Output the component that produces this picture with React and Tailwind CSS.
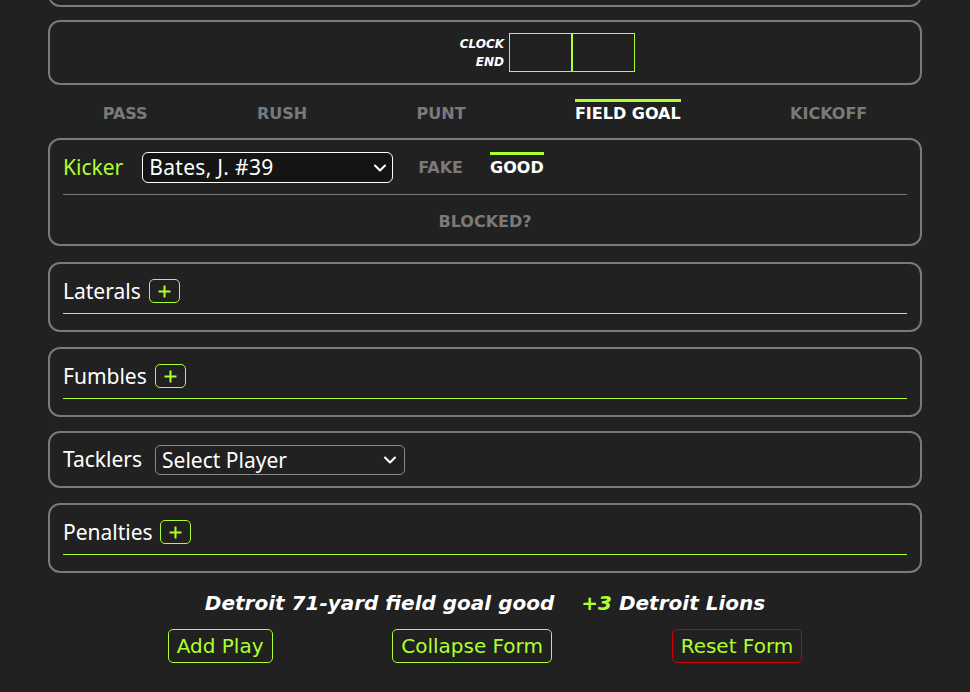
import React from 'react';
import { ChevronDown } from 'lucide-react';

const card = 'border-2 border-[#7a7a7a] rounded-[12px]';

function PlusBtn() {
  return (
    <div className="w-[31px] h-[24px] border border-[#adff2f] rounded-[5px] flex items-center justify-center">
      <svg width="13" height="13" viewBox="0 0 13 13">
        <path d="M6.5 0.5V12.5M0.5 6.5H12.5" stroke="#adff2f" strokeWidth="2" fill="none" />
      </svg>
    </div>
  );
}

function Section({ title, gap = 'gap-[8px]' }) {
  return (
    <div className={`${card} px-[13px] pt-[13px] pb-[16px]`}>
      <div className={`flex items-center h-[28px] ${gap}`}>
        <span className="text-white text-[21px] leading-[28px] font-['Noto_Sans',sans-serif]">{title}</span>
        <PlusBtn />
      </div>
      <div className="mt-[8px] h-px bg-[#adff2f]" />
    </div>
  );
}

function Tab({ label, active }) {
  return (
    <div
      className={`border-t-[3px] pt-[2px] leading-[20px] text-[16px] font-bold ${
        active ? 'border-[#adff2f] text-white' : 'border-transparent text-[#7a7a7a]'
      }`}
    >
      {label}
    </div>
  );
}

function Btn({ label, red }) {
  return (
    <div
      className={`h-[34px] px-[8px] flex items-center border rounded-[5px] text-[20px] text-[#adff2f] ${
        red ? 'border-[#d00000]' : 'border-[#adff2f]'
      }`}
    >
      {label}
    </div>
  );
}

export default function App() {
  return (
    <div className="min-h-[692px] w-full bg-[#212121] px-[48px] flex flex-col overflow-hidden font-['DejaVu_Sans',sans-serif]">
      {/* previous card remnant */}
      <div className={`-mt-[30px] h-[37px] shrink-0 ${card}`} />

      {/* clock card */}
      <div className={`mt-[13px] h-[65px] shrink-0 flex items-center ${card}`}>
        <div className="w-[454px] text-right text-white text-[12px] italic font-bold leading-[18px]">
          <div>CLOCK</div>
          <div>END</div>
        </div>
        <div className="ml-[5px] flex h-[39px]">
          <div className="w-[63px] h-full border border-[#adff2f]" />
          <div className="w-[63px] h-full border border-[#adff2f]" />
        </div>
      </div>

      {/* tabs */}
      <div className="mt-[14px] mb-[14px] flex justify-around">
        <Tab label="PASS" />
        <Tab label="RUSH" />
        <Tab label="PUNT" />
        <Tab label="FIELD GOAL" active />
        <Tab label="KICKOFF" />
      </div>

      {/* kicker card */}
      <div className={`${card} px-[13px] pt-[12px] pb-[12px]`}>
        <div className="flex items-center h-[31px]">
          <span className="text-[#adff2f] text-[21px] font-['Noto_Sans',sans-serif]">Kicker</span>
          <div className="ml-[19px] w-[251px] h-[31px] border border-white rounded-[6px] bg-[#141414] flex items-center justify-between pl-[6px] pr-[2px]">
            <span className="text-white text-[21px] font-['Noto_Sans',sans-serif] leading-none tracking-[0.3px]">Bates, J. #39</span>
            <ChevronDown size={20} strokeWidth={2.5} color="#ffffff" />
          </div>
          <div className="ml-[25px] h-[31px] border-t-[3px] border-transparent pt-[3px] leading-[20px] text-[16px] font-bold text-[#7a7a7a]">
            FAKE
          </div>
          <div className="ml-[27px] h-[31px] border-t-[3px] border-[#adff2f] pt-[3px] leading-[20px] text-[16px] font-bold text-white">
            GOOD
          </div>
        </div>
        <div className="mt-[11px] h-px bg-[#7a7a7a]" />
        <div className="mt-[17px] text-center leading-[20px] text-[16px] font-bold text-[#7a7a7a]">BLOCKED?</div>
      </div>

      <div className="mt-[16px]">
        <Section title="Laterals" />
      </div>
      <div className="mt-[15px]">
        <Section title="Fumbles" />
      </div>

      {/* tacklers */}
      <div className={`mt-[14px] ${card} px-[13px] pt-[12px] pb-[11px]`}>
        <div className="flex items-center h-[30px]">
          <span className="text-white text-[21px] font-['Noto_Sans',sans-serif]">Tacklers</span>
          <div className="ml-[13px] w-[250px] h-[30px] border border-[#8a8a8a] rounded-[5px] flex items-center justify-between pl-[6px] pr-[4px]">
            <span className="text-white text-[21px] font-['Noto_Sans',sans-serif] leading-none">Select Player</span>
            <ChevronDown size={20} strokeWidth={2.5} color="#ffffff" />
          </div>
        </div>
      </div>

      <div className="mt-[15px]">
        <Section title="Penalties" gap="gap-[7px]" />
      </div>

      {/* summary */}
      <div className="mt-[16px] text-center leading-[28px] text-[20px] font-bold italic text-white">
        Detroit 71-yard field goal good
        <span className="ml-[27px] text-[#adff2f]">+3</span> Detroit Lions
      </div>

      <div className="mt-[12px] flex justify-evenly">
        <Btn label="Add Play" />
        <Btn label="Collapse Form" />
        <Btn label="Reset Form" red />
      </div>
    </div>
  );
}
